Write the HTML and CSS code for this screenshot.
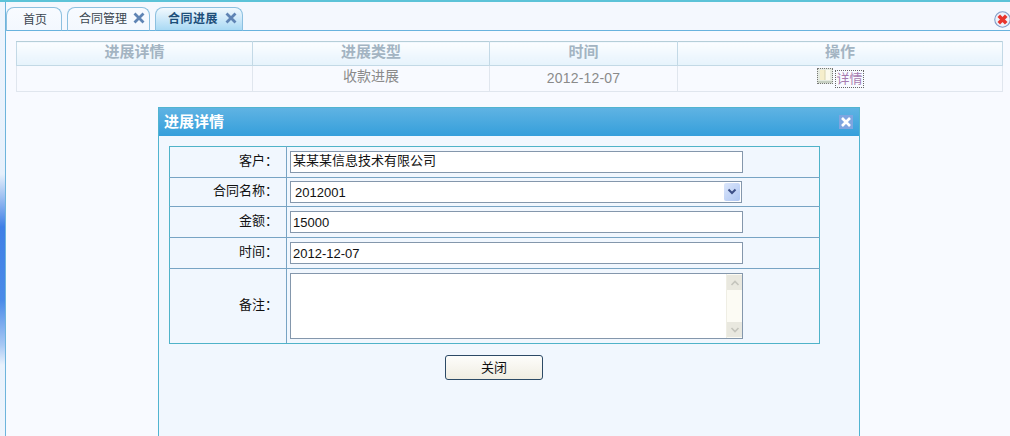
FILE: index.html
```html
<!DOCTYPE html>
<html lang="zh">
<head>
<meta charset="utf-8">
<title>合同进展</title>
<link rel="stylesheet" href="styles.css">
</head>
<body>
<div class="edge"></div>
<main class="panel">
  <nav class="tabbar">
    <div class="tab tab-home">首页</div>
    <div class="tab tab-two">合同管理<svg class="x" viewBox="0 0 14 14"><path d="M2.5 2.5l9 9M11.5 2.5l-9 9"/></svg></div>
    <div class="tab tab-active">合同进展<svg class="x" viewBox="0 0 14 14"><path d="M2.5 2.5l9 9M11.5 2.5l-9 9"/></svg></div>
    <svg class="close-all" viewBox="0 0 16 16"><circle cx="8" cy="8" r="7.3" fill="#eef2fa" stroke="#7f9cc8"/><path d="M4.5 4.5l7 7M11.5 4.5l-7 7" stroke="#e8342c" stroke-width="3.4"/></svg>
  </nav>
  <table class="list">
    <colgroup><col class="c1"><col class="c2"><col class="c3"><col class="c4"></colgroup>
    <tr class="list-head"><th>进展详情</th><th>进展类型</th><th>时间</th><th>操作</th></tr>
    <tr class="list-row"><td></td><td>收款进展</td><td class="date">2012-12-07</td><td class="ops">
      <span class="act"><svg class="book" viewBox="0 0 16 16"><rect width="16" height="16" fill="#e6ebe2"/><path d="M3 2h5v10H3z" fill="#f6eecb"/><path d="M8 2h5v10H8z" fill="#fcfaee"/><path d="M8 2v10" stroke="#d8d3b0"/><path d="M1 13h14v2H1z" fill="#c6cfc2"/></svg><a class="link">详情</a></span>
    </td></tr>
  </table>
</main>
<section class="dialog">
  <header class="dialog-title"><span class="dialog-name">进展详情</span>
    <svg class="dialog-x" viewBox="0 0 14 14"><rect width="14" height="14" fill="#7fa5e0"/><path d="M3 3l8 8M11 3l-8 8" stroke="#fff" stroke-width="2.6"/></svg>
  </header>
  <div class="dialog-body">
    <table class="form">
      <tr class="r1"><th>客户：</th><td><div class="field cjk">某某某信息技术有限公司</div></td></tr>
      <tr class="r2"><th>合同名称：</th><td><div class="field select"><span>2012001</span><span class="arrow"><svg viewBox="0 0 10 8"><path d="M1.5 1.5L5 5l3.5-3.5" fill="none" stroke="#3c4f86" stroke-width="2"/></svg></span></div></td></tr>
      <tr class="r3"><th>金额：</th><td><div class="field">15000</div></td></tr>
      <tr class="r4"><th>时间：</th><td><div class="field">2012-12-07</div></td></tr>
      <tr class="r5"><th>备注：</th><td><div class="field area"><div class="scroll"><span class="sb"><svg viewBox="0 0 10 8"><path d="M1.5 6L5 2.5 8.5 6" fill="none" stroke="#c4c4bc" stroke-width="1.6"/></svg></span><span class="sb"><svg viewBox="0 0 10 8"><path d="M1.5 2L5 5.5 8.5 2" fill="none" stroke="#c4c4bc" stroke-width="1.6"/></svg></span></div></div></td></tr>
    </table>
    <div class="actions"><button class="btn" type="button">关闭</button></div>
  </div>
</section>
</body>
</html>
```
FILE: styles.css
```css
* { box-sizing: border-box; }
html, body { margin: 0; height: 436px; overflow: hidden; }
body {
  position: relative;
  display: flex;
  border-top: 2px solid #5cc3d8;
  background: #f8faff;
  font-family: "Liberation Sans", "Noto Sans CJK SC", sans-serif;
  font-size: 13px;
  color: #222;
}
.edge {
  width: 5px;
  height: 434px;
  background: linear-gradient(180deg, #eef5fd 0, #e6f0fc 172px, #9fc0f2 195px, #3f7fe6 225px, #4a8ae8 298px, #a8c8f4 343px, #e8f1fc 363px, #eef5fd 434px);
}
.panel {
  flex: 1;
  border-left: 1px solid #6db4dc;
  height: 434px;
}
.tabbar {
  position: relative;
  display: flex;
  align-items: flex-end;
  gap: 5px;
  height: 29px;
  background: #f4f8fe;
  border-bottom: 1px solid #69b3de;
}
.tab {
  display: flex;
  align-items: center;
  height: 24px;
  margin-bottom: -1px;
  padding-left: 11px;
  border: 1px solid #8cc0e0;
  border-bottom-color: #69b3de;
  border-radius: 8px 8px 0 0;
  font-size: 12px;
  color: #3b4650;
  background: linear-gradient(180deg, #f8fbff, #f3f8fe);
}
.tab-home { width: 56px; padding-left: 16px; padding-bottom: 2px; }
.tab-two { width: 83px; gap: 5px; padding-bottom: 3px; }
.tab-active {
  width: 88px;
  gap: 6px;
  padding-left: 12px;
  padding-bottom: 3px;
  font-weight: bold;
  letter-spacing: 0.5px;
  color: #1d4f7a;
  background: linear-gradient(180deg, #f2f9fe, #a9d9f4);
}
.x { width: 14px; height: 14px; fill: none; stroke: #5f84b4; stroke-width: 2.8; }
.close-all { position: absolute; right: -1px; top: 9px; width: 17px; height: 17px; }
.list {
  width: 987px;
  margin: 10px 0 0 10px;
  border-collapse: collapse;
  table-layout: fixed;
}
.c1 { width: 236px; }
.c2 { width: 237px; }
.c3 { width: 188px; }
.list th, .list td { text-align: center; padding: 0 0 5px; line-height: 15px; }
.list-head th {
  height: 24px;
  border: 1px solid #c3d9e6;
  border-top-color: #b5ced8;
  font-size: 15px;
  font-weight: bold;
  color: #a3b4c2;
  background: linear-gradient(180deg, #fbfdff, #e6f3fc);
}
.list-row td {
  height: 26px;
  border: 1px solid #e0e6ee;
  font-size: 14px;
  color: #8a8a8a;
}
.list-row .date { letter-spacing: 0.2px; padding-bottom: 1px; }
.list-row .ops { padding: 2px 0 0; vertical-align: top; }
.act { display: inline-flex; align-items: flex-start; gap: 3px; }
.book { width: 16px; height: 16px; outline: 1px dotted #777; outline-offset: -1px; }
.link { color: #a67bb0; font-size: 13px; outline: 1px dotted #666; line-height: 16px; margin-top: 3px; }
.dialog {
  position: absolute;
  left: 158px;
  top: 105px;
  width: 702px;
  height: 340px;
  border: 1px solid #52b4d0;
  background: #f1f7fe;
}
.dialog-title {
  display: flex;
  align-items: center;
  justify-content: space-between;
  height: 28px;
  padding: 0 6px 0 5px;
  font-size: 15px;
  font-weight: bold;
  color: #fff;
  background: linear-gradient(180deg, #5fb3e3, #359fdb);
}
.dialog-name { padding-bottom: 3px; }
.dialog-x { width: 14px; height: 14px; }
.dialog-body { padding: 10px 10px 0; }
.form { width: 651px; border-collapse: collapse; table-layout: fixed; }
.form th, .form td { border: 1px solid #78a4c4; }
.form th { border-left-color: #4fb3c9; }
.form td { border-right-color: #4fb3c9; }
.r1 th, .r1 td { border-top-color: #4fb3c9; }
.r5 th, .r5 td { border-bottom-color: #4fb3c9; }
.form th {
  width: 117px;
  padding: 0 8px 2px 0;
  text-align: right;
  font-family: "Liberation Sans", "Noto Sans CJK TC", sans-serif;
  font-size: 13px;
  line-height: 16px;
  font-weight: normal;
  color: #111;
}
.form td { padding: 0 0 0 3px; }
.r1 { height: 31px; }
.r2 { height: 29px; }
.r3, .r4 { height: 31px; }
.r5 { height: 75px; }
.field {
  display: flex;
  align-items: center;
  width: 453px;
  height: 22px;
  padding-left: 2px;
  border: 1px solid #8497ac;
  background: #fff;
  font-size: 13px;
  color: #111;
}
.cjk { padding-bottom: 3px; line-height: 16px; }
.select { width: 452px; justify-content: space-between; padding: 0 1px 0 4px; }
.arrow {
  display: flex;
  align-items: center;
  justify-content: center;
  width: 16px;
  height: 18px;
  border-radius: 2px;
  background: linear-gradient(135deg, #dbe6fb, #aec6f2);
}
.arrow svg { width: 10px; height: 8px; }
.area { height: 66px; justify-content: flex-end; padding: 0; align-items: stretch; }
.scroll {
  display: flex;
  flex-direction: column;
  justify-content: space-between;
  width: 16px;
  padding: 1px 0;
  background: #fcfbf4;
  border-left: 1px solid #efeee4;
}
.sb {
  display: flex;
  align-items: center;
  justify-content: center;
  height: 15px;
  background: #e9e8df;
}
.sb svg { width: 10px; height: 8px; }
.actions { display: flex; justify-content: center; padding: 11px 30px 0 0; }
.btn {
  width: 98px;
  height: 25px;
  padding: 0 0 3px;
  border: 1px solid #2c4a66;
  border-radius: 3px;
  background: linear-gradient(180deg, #fdfdfb, #f0ede2);
  font: 13px "Liberation Sans", "Noto Sans CJK SC", sans-serif;
  color: #111;
}
```
